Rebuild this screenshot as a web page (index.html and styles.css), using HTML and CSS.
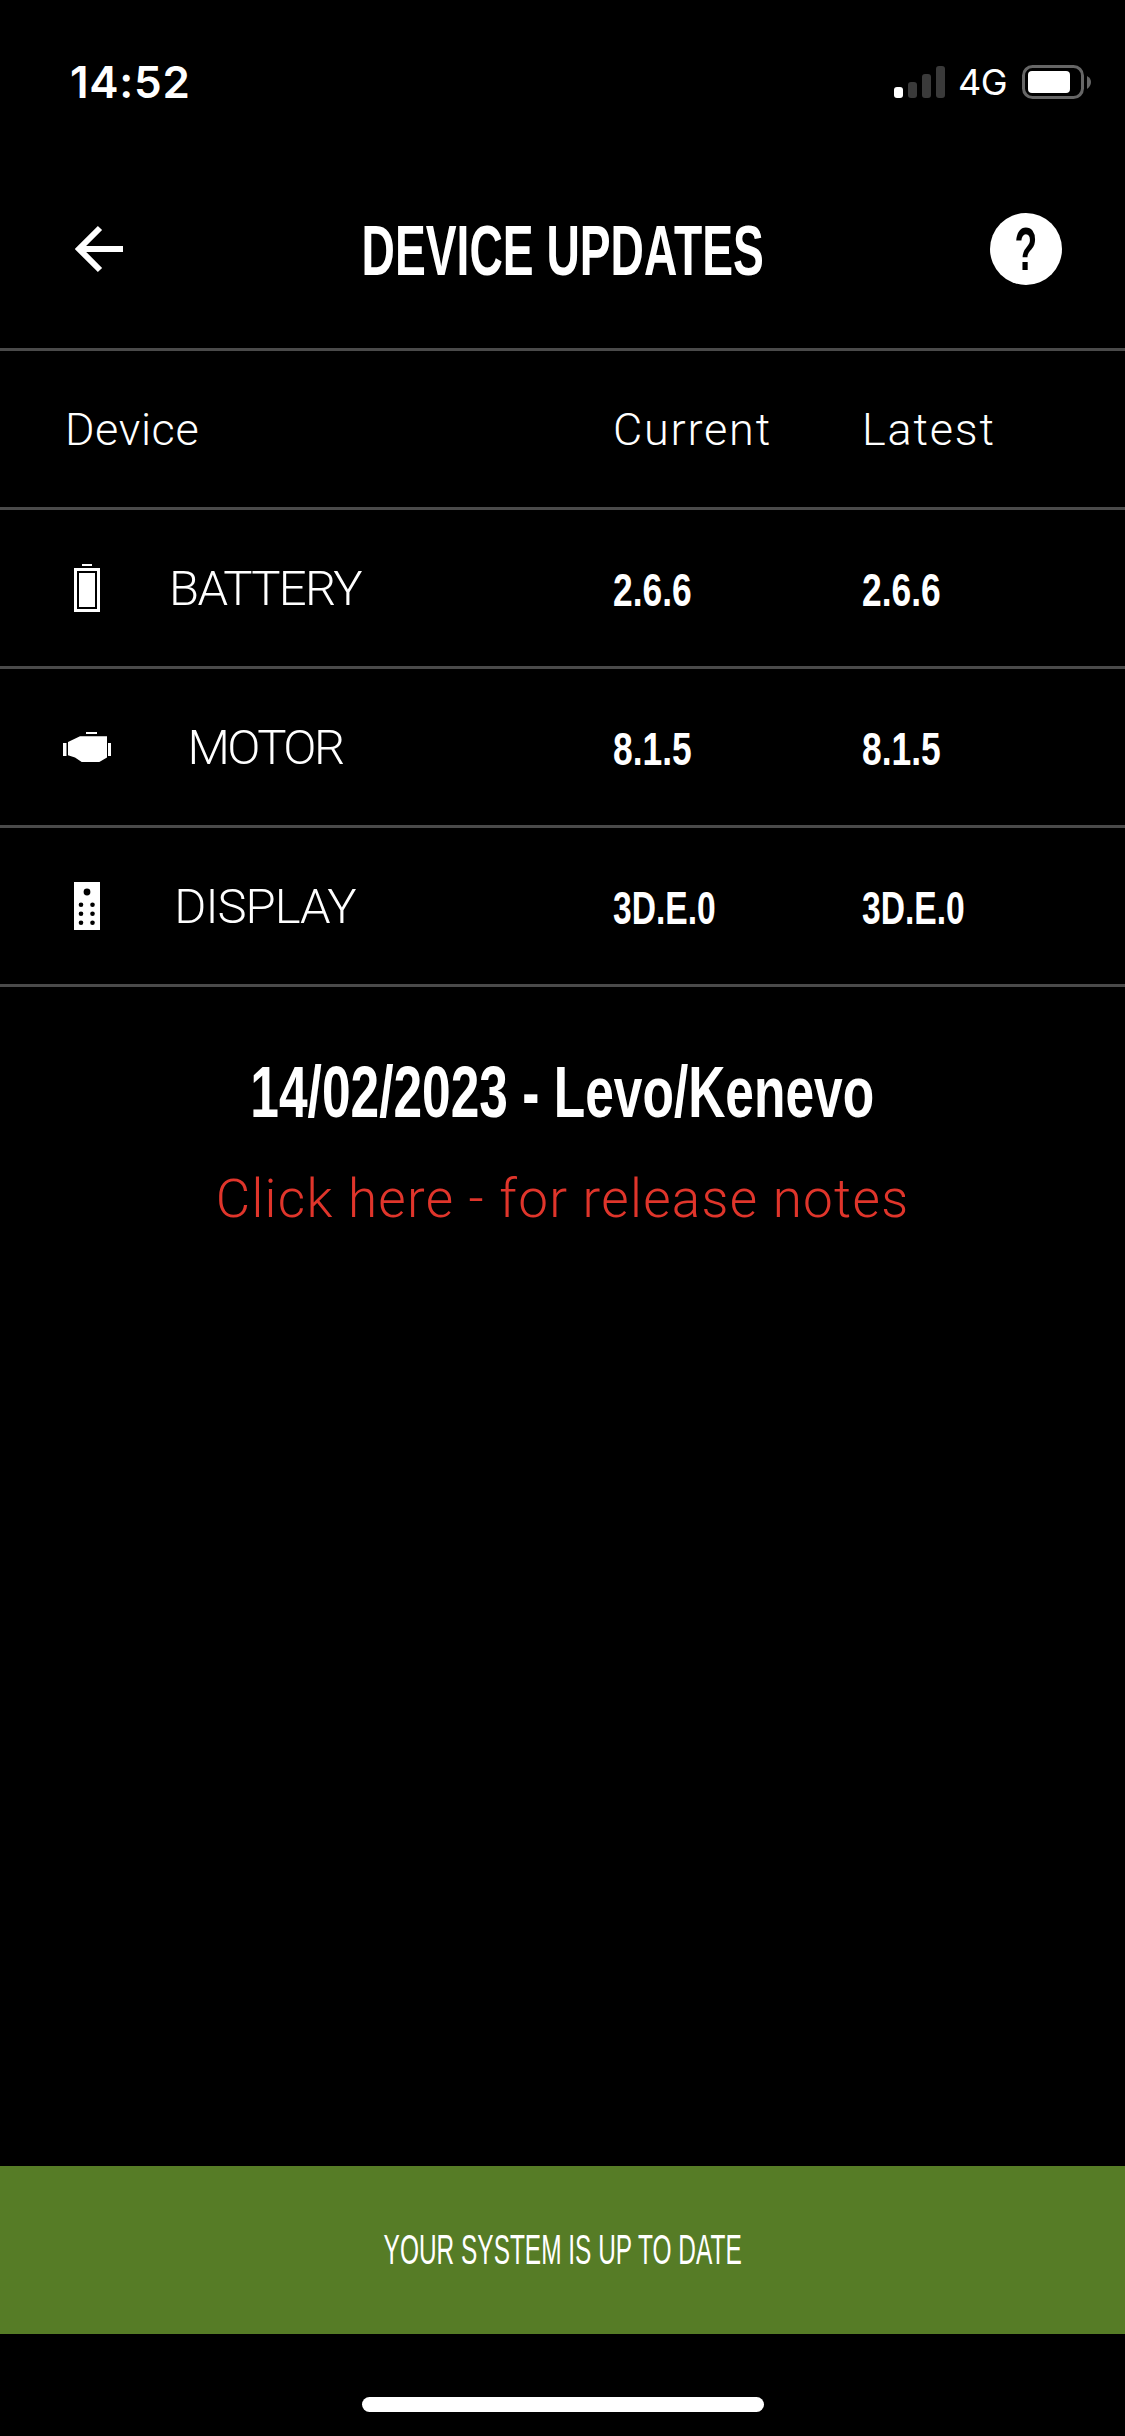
FILE: index.html
```html
<!DOCTYPE html>
<html lang="en">
<head>
    <meta charset="UTF-8">
    <meta name="viewport" content="width=device-width, initial-scale=1.0">
    <title>Device Updates</title>
    <link rel="stylesheet" href="styles.css">
</head>
<body>
    <div class="screen">
        <div class="status-bar">
            <span class="clock">14:52</span>
            <div class="status-icons">
                <svg class="signal" width="51" height="32" viewBox="0 0 51 32">
                    <rect x="0" y="21" width="9" height="11" rx="3" fill="#fff"/>
                    <rect x="14" y="16" width="9" height="16" rx="3" fill="#3a3a3a"/>
                    <rect x="28" y="8" width="9" height="24" rx="3" fill="#3a3a3a"/>
                    <rect x="42" y="0" width="9" height="32" rx="3" fill="#3a3a3a"/>
                </svg>
                <span class="network">4G</span>
                <svg class="phone-battery" width="70" height="34" viewBox="0 0 70 34">
                    <rect x="1.5" y="1.5" width="59" height="31" rx="9" fill="none" stroke="#666" stroke-width="3"/>
                    <rect x="6" y="6" width="42" height="22" rx="4" fill="#fff"/>
                    <path d="M65 11 Q69 13 69 17 Q69 21 65 24 Z" fill="#666"/>
                </svg>
            </div>
        </div>

        <header class="top-bar">
            <svg class="back" width="50" height="48" viewBox="0 0 50 48">
                <path d="M25 3 L4 24 L25 45 M4 24 H48" fill="none" stroke="#fff" stroke-width="6"/>
            </svg>
            <h1 class="title"><span class="narrow title-text">DEVICE UPDATES</span></h1>
            <div class="help"><span class="narrow help-mark">?</span></div>
        </header>

        <div class="row head-row">
            <div class="head-device">Device</div>
            <div>Current</div>
            <div>Latest</div>
        </div>

        <div class="row">
            <div class="device">
                <div class="device-icon">
                    <svg width="26" height="48" viewBox="0 0 26 48">
                        <rect x="8" y="0" width="10" height="2" fill="#fff"/>
                        <rect x="0" y="4" width="26" height="44" fill="#fff"/>
                        <rect x="3" y="7" width="20" height="38" fill="#000"/>
                        <rect x="5" y="9" width="16" height="34" fill="#fff"/>
                    </svg>
                </div>
                <div class="device-name name-battery">BATTERY</div>
            </div>
            <div class="version"><span class="narrow">2.6.6</span></div>
            <div class="version"><span class="narrow">2.6.6</span></div>
        </div>

        <div class="row">
            <div class="device">
                <div class="device-icon">
                    <svg width="48" height="31" viewBox="0 0 48 31">
                        <rect x="23" y="0" width="11" height="2" fill="#fff"/>
                        <rect x="0" y="11" width="3.5" height="13" fill="#fff"/>
                        <rect x="45" y="11" width="3" height="13" fill="#fff"/>
                        <path d="M5 10 L17 4.3 H44 V25.6 L36.3 30 H18.7 L12 25.6 L5 23.3 Z" fill="#fff"/>
                    </svg>
                </div>
                <div class="device-name name-motor">MOTOR</div>
            </div>
            <div class="version"><span class="narrow">8.1.5</span></div>
            <div class="version"><span class="narrow">8.1.5</span></div>
        </div>

        <div class="row">
            <div class="device">
                <div class="device-icon">
                    <svg width="26" height="48" viewBox="0 0 26 48">
                        <rect x="0" y="0" width="26" height="48" fill="#fff"/>
                        <circle cx="13" cy="10" r="3.4" fill="#000"/>
                        <circle cx="7" cy="22.7" r="2.3" fill="#000"/>
                        <circle cx="18.5" cy="22.7" r="2.3" fill="#000"/>
                        <circle cx="7" cy="31.7" r="2.3" fill="#000"/>
                        <circle cx="18.5" cy="31.7" r="2.3" fill="#000"/>
                        <circle cx="7" cy="40.7" r="2.3" fill="#000"/>
                        <circle cx="18.5" cy="40.7" r="2.3" fill="#000"/>
                    </svg>
                </div>
                <div class="device-name">DISPLAY</div>
            </div>
            <div class="version version-long"><span class="narrow">3D.E.0</span></div>
            <div class="version version-long"><span class="narrow">3D.E.0</span></div>
        </div>

        <div class="notes">
            <div class="notes-date"><span class="narrow">14/02/2023 - Levo/Kenevo</span></div>
            <div class="notes-link">Click here - for release notes</div>
        </div>

        <div class="banner"><span class="narrow banner-text">YOUR SYSTEM IS UP TO DATE</span></div>
        <div class="home-wrap"><div class="home-bar"></div></div>
    </div>
</body>
</html>
```

FILE: styles.css
```css
* {
    box-sizing: border-box;
}
html, body {
    margin: 0;
    background: #000;
}
.screen {
    width: 1125px;
    height: 2436px;
    display: flex;
    flex-direction: column;
    color: #fff;
    font-family: "Roboto", sans-serif;
    overflow: hidden;
}
/* no condensed face installed, so squeeze the bold one */
.narrow {
    display: inline-block;
    font-family: "Liberation Sans", sans-serif;
    white-space: nowrap;
    transform: scaleX(0.72);
    transform-origin: left center;
}

/* status bar */
.status-bar {
    height: 164px;
    padding: 0 33px 0 70px;
    display: flex;
    justify-content: space-between;
    align-items: center;
}
.clock {
    font-family: "Inter", sans-serif;
    font-size: 44px;
    font-weight: 600;
    letter-spacing: 0.7px;
}
.status-icons {
    display: flex;
    align-items: center;
}
.network {
    margin: 0 15px 0 13px;
    font-family: "Inter", sans-serif;
    font-size: 36px;
    letter-spacing: -0.5px;
}

/* header */
.top-bar {
    height: 187px;
    padding: 0 63px 14px;
    display: grid;
    grid-template-columns: 1fr auto 1fr;
    align-items: center;
    border-bottom: 3px solid #4a4a4a;
}
.back {
    margin-left: 12px;
}
.title {
    margin: 0;
    padding-top: 3px;
    font-size: 70px;
    font-weight: 700;
}
.title-text {
    transform: scaleX(0.66);
    transform-origin: center;
}
.help {
    justify-self: end;
    width: 72px;
    height: 72px;
    border-radius: 50%;
    background: #fff;
    color: #000;
    font-size: 62px;
    font-weight: 700;
    line-height: 72px;
    text-align: center;
}
.help-mark {
    transform: scaleX(0.6);
    transform-origin: center;
}

/* table */
.row {
    height: 159px;
    display: grid;
    grid-template-columns: 613px 249px 1fr;
    align-items: center;
    border-bottom: 3px solid #4a4a4a;
}
.head-row {
    font-size: 45px;
    font-weight: 300;
    letter-spacing: 1.8px;
}
.head-device {
    padding-left: 65px;
    letter-spacing: 0.6px;
}
.device {
    display: grid;
    grid-template-columns: 174px 182px;
    align-items: center;
}
.device-icon {
    display: flex;
    justify-content: center;
}
.device-icon svg {
    display: block;
}
.device-name {
    margin: 0 -20px;
    font-size: 49px;
    font-weight: 300;
    letter-spacing: -1px;
    text-align: center;
    white-space: nowrap;
}
.name-battery {
    letter-spacing: -1.7px;
}
.name-motor {
    letter-spacing: -2.6px;
}
.version {
    padding-top: 4px;
    font-size: 46px;
    font-weight: 700;
}
.version .narrow {
    transform: scaleX(0.77);
}
.version-long .narrow {
    transform: scaleX(0.73);
}

/* release notes */
.notes {
    flex: 1;
    padding-top: 63px;
    text-align: center;
}
.notes-date {
    font-size: 72px;
    font-weight: 700;
}
.notes-date .narrow {
    transform: scaleX(0.715);
    transform-origin: center;
}
.notes-link {
    margin-top: 33px;
    color: #e0352b;
    font-size: 53px;
    font-weight: 300;
    letter-spacing: 1.3px;
}

/* bottom */
.banner {
    height: 168px;
    background: #567c26;
    display: flex;
    justify-content: center;
    align-items: center;
    font-size: 42px;
}
.banner-text {
    transform: scaleX(0.582);
    transform-origin: center;
}
.home-wrap {
    height: 102px;
    padding-top: 63px;
    display: flex;
    justify-content: center;
}
.home-bar {
    width: 402px;
    height: 15px;
    border-radius: 8px;
    background: #fff;
}
```
